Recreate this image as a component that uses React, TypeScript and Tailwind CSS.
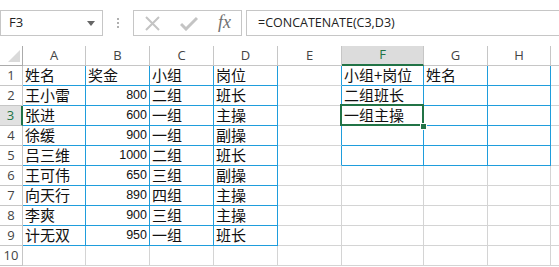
import React from "react";

const BLUE = "#1f9ddc";
const GRAY = "#d4d4d4";

const colWidths = [23, 63, 64, 64, 64, 64, 82, 64, 63];
const letters = ["A", "B", "C", "D", "E", "F", "G", "H"];

const data: string[][] = [
  ["姓名", "奖金", "小组", "岗位", "", "小组+岗位", "姓名", ""],
  ["王小雷", "800", "二组", "班长", "", "二组班长", "", ""],
  ["张进", "600", "一组", "主操", "", "一组主操", "", ""],
  ["徐缓", "900", "一组", "副操", "", "", "", ""],
  ["吕三维", "1000", "二组", "班长", "", "", "", ""],
  ["王可伟", "650", "三组", "副操", "", "", "", ""],
  ["向天行", "890", "四组", "主操", "", "", "", ""],
  ["李爽", "900", "三组", "主操", "", "", "", ""],
  ["计无双", "950", "一组", "班长", "", "", "", ""],
  ["", "", "", "", "", "", "", ""],
];

function inBlue(r: number, c: number) {
  if (r >= 1 && r <= 9 && c >= 0 && c <= 3) return true;
  if (r >= 1 && r <= 5 && c >= 5 && c <= 7) return true;
  return false;
}

function App() {
  const cjk = "'Noto Sans CJK SC', 'Noto Sans', sans-serif";
  const ui = "'Open Sans', 'Liberation Sans', sans-serif";
  const num = "'Liberation Sans', Arial, sans-serif";
  return (
    <div className="w-[559px] h-[267px] bg-white overflow-hidden relative" style={{ fontFamily: ui }}>
      {/* formula bar */}
      <div className="h-[46px] flex items-start pt-[10px]">
        <div className="w-[103px] h-[26px] border border-[#c6c6c6] flex items-center justify-between pl-[8px] pr-[7px]">
          <span className="text-[13px] text-[#222]">F3</span>
          <svg width="8" height="5" viewBox="0 0 8 5"><path d="M0 0h8L4 5z" fill="#666" /></svg>
        </div>
        <div className="w-[30px] h-[26px] flex flex-col items-center justify-center gap-[2px]">
          <div className="w-[2px] h-[2px] bg-[#b0b0b0]" />
          <div className="w-[2px] h-[2px] bg-[#b0b0b0]" />
          <div className="w-[2px] h-[2px] bg-[#b0b0b0]" />
        </div>
        <div className="w-[109px] h-[26px] border border-[#c6c6c6] flex items-center pl-[11px] gap-[20px]">
          <svg width="15" height="15" viewBox="0 0 15 15"><path d="M1 1L14 14M14 1L1 14" stroke="#c4c4c4" strokeWidth="2" /></svg>
          <svg width="18" height="15" viewBox="0 0 18 15"><path d="M1 8L6 13L17 2" stroke="#c4c4c4" strokeWidth="3" fill="none" /></svg>
          <span className="text-[18px] italic text-[#707070] leading-none -mt-[2px]" style={{ fontFamily: "'Liberation Serif', serif" }}>fx</span>
        </div>
        <div className="ml-[4px] flex-1 h-[26px] border border-[#c6c6c6] border-r-0 flex items-center pl-[11px]">
          <span className="text-[12.5px] text-[#222]" style={{ fontFamily: ui }}>=CONCATENATE(C3,D3)</span>
        </div>
      </div>
      {/* grid */}
      <div className="relative">
        <div
          className="grid"
          style={{ gridTemplateColumns: colWidths.map((w) => `${w}px`).join(" ") + " 1fr", gridAutoRows: "20px" }}
        >
          <div className="border-r border-b border-[#ababab] relative bg-white">
            <svg className="absolute right-[2px] bottom-[3px]" width="12" height="12" viewBox="0 0 12 12"><path d="M12 0V12H0z" fill="#dadada" /></svg>
          </div>
          {letters.map((l, i) => (
            <div
              key={l}
              className={
                i === 5
                  ? "bg-[#dcdcdc] border-r border-[#c6c6c6] border-b-2 border-b-[#217346] flex items-center justify-center text-[13px] text-[#217346]"
                  : "bg-white border-r border-b border-[#c6c6c6] flex items-center justify-center text-[13px] text-[#444]"
              }
            >
              {l}
            </div>
          ))}
          <div className="border-b border-[#c6c6c6]" />
          {data.map((row, ri) => {
            const r = ri + 1;
            return (
              <React.Fragment key={r}>
                <div
                  className={
                    r === 3
                      ? "bg-[#e1e1e1] border-r-2 border-r-[#217346] border-b border-b-[#c6c6c6] flex items-center justify-center text-[13px] text-[#217346]"
                      : "bg-white border-r border-b border-[#c6c6c6] flex items-center justify-center text-[13px] text-[#444]"
                  }
                >
                  {r}
                </div>
                {row.map((v, c) => {
                  const blueR = inBlue(r, c) || inBlue(r, c + 1);
                  const blueB = inBlue(r, c) || inBlue(r + 1, c);
                  const isNum = /^\d+$/.test(v);
                  return (
                    <div
                      key={c}
                      className={
                        "border-r border-b flex items-center overflow-visible whitespace-nowrap " +
                        (isNum ? "justify-end pr-[2px] text-[12.5px] " : "pl-[2px] text-[15px] ")
                      }
                      style={{
                        borderRightColor: blueR ? BLUE : GRAY,
                        borderBottomColor: blueB ? BLUE : GRAY,
                        fontFamily: isNum ? num : cjk,
                        color: "#111",
                      }}
                    >
                      {v}
                    </div>
                  );
                })}
                <div className="border-b border-[#d4d4d4]" />
              </React.Fragment>
            );
          })}
        </div>
        <div
          className="absolute border-2 border-[#217346] pointer-events-none"
          style={{ left: 340, top: 58, width: 84, height: 22 }}
        />
        <div
          className="absolute w-[7px] h-[7px] bg-[#217346] border border-white pointer-events-none"
          style={{ left: 420, top: 77 }}
        />
      </div>
    </div>
  );
}

export default App;
